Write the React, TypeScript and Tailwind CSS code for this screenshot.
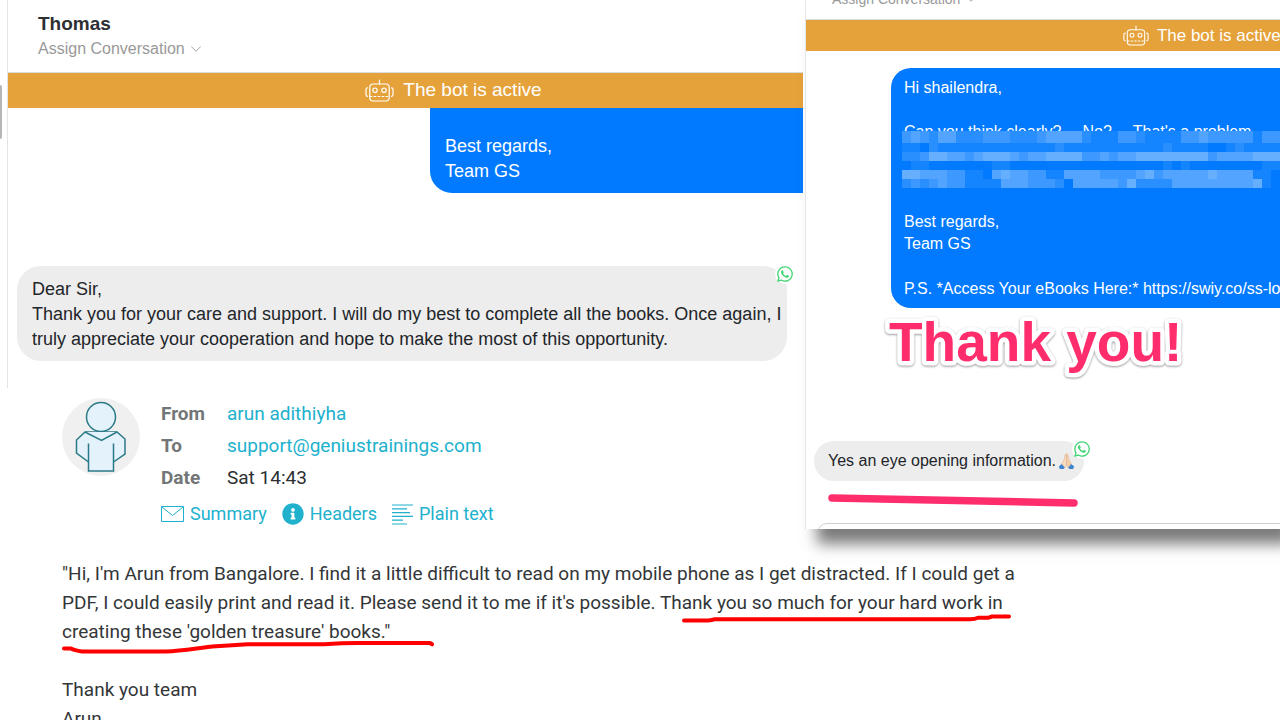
import { ChevronDown } from 'lucide-react'
import { FaInfoCircle, FaWhatsapp } from 'react-icons/fa'

// White strength (0-9) of each cell in the pixelated part of the message
const MOSAIC = [
  '343244222333222344442111332111133433333133',
  '110211111111111112111111111112111100121111',
  '223554434555434455553343445555555534444555',
  '011000000011000000000000000001010000000011',
  '554443311045443311444433334534444454444110',
  '232343311114443332044444352222444444444510',
]

function BotIcon({ className }: { className: string }) {
  return (
    <svg viewBox="0 0 29 24" className={className} fill="none" stroke="currentColor" strokeWidth="1.2" strokeLinecap="round">
      <path d="M14.5 1v4" />
      <path d="M4.8 17V8.500a3.500 3.500 0 0 1 3.500-3.500h12.400a3.500 3.500 0 0 1 3.500 3.500V19a3 3 0 0 1-3 3H7.800a3 3 0 0 1-3-3z" />
      <circle cx="10" cy="11.200" r="2.200" />
      <circle cx="19" cy="11.200" r="2.200" />
      <path d="M5 17.500h19" strokeDasharray="1.800 2.200" />
      <path d="M2.500 8.800c-1.200 0-1.500.6-1.500 1.600v5.200c0 1 .3 1.700 1.500 1.700M26.500 8.800c1.200 0 1.500.6 1.500 1.600v5.200c0 1-.3 1.700-1.500 1.700" />
    </svg>
  )
}

function PrayIcon() {
  return (
    <svg viewBox="0 0 18 18" className="w-[17px] h-[17px] shrink-0" role="img" aria-label="🙏🏻">
      <path d="M1 14l3.500-2.500 3 3.800L6 17H1.800z" fill="#3d84cf" />
      <path d="M17 14l-3.500-2.500-3 3.800L12 17h4.200z" fill="#3d84cf" />
      <path d="M8.900 1c-.8-.1-1.300.5-1.500 1.500L6.500 7 4 11.300l3.300 4.200 1.700-2.800z" fill="#f8dcc0" stroke="#d9a982" strokeWidth=".5" />
      <path d="M9.100 1c.8-.1 1.300.5 1.500 1.500l.9 4.500 2.500 4.300-3.300 4.200L9 12.700z" fill="#f5d0ad" stroke="#d9a982" strokeWidth=".5" />
    </svg>
  )
}

function Mosaic() {
  return (
    <svg viewBox="0 0 378 57" className="absolute -left-[2px] top-[10px] w-[378px] h-[57px]" shapeRendering="crispEdges" aria-hidden="true">
      <rect width="378" height="57" fill="#017aff" />
      {MOSAIC.map((row, r) =>
        row.split('').map((cell, c) => (
          <rect
            key={`${r}-${c}`}
            x={c * 9}
            y={r === 0 ? 0 : 3 + r * 9}
            width="9"
            height={r === 0 ? 12 : 9}
            fill="#ffffff"
            fillOpacity={Number(cell) * 0.08}
          />
        ))
      )}
    </svg>
  )
}

function WhatsAppBadge() {
  return (
    <span className="absolute -top-[2px] -right-[8px] p-[1px] rounded-full bg-white text-[#3fd573]">
      <FaWhatsapp className="w-[18px] h-[18px]" />
    </span>
  )
}

function LeftChat() {
  return (
    <section className="flex h-[388px] pr-[2px]">
      <div className="w-[7px] shrink-0 pt-[85px]">
        <div className="w-[2px] h-[54px] rounded-r bg-[#b5b5b5]" />
      </div>
      <div className="flex-1 min-w-0 border-l border-[#e4e4e6]">
        <header className="h-[73px] pt-3 pl-[30px] border-b border-[#d9dce0]">
          <h2 className="text-[19px] leading-6 font-bold text-[#2d2f33]">Thomas</h2>
          <button type="button" className="flex items-center gap-[2px] text-[16px] leading-[26px] text-[#999999]">
            Assign Conversation
            <ChevronDown className="w-[18px] h-[18px]" strokeWidth={1.2} />
          </button>
        </header>
        <div className="h-[35px] pl-24 flex items-center justify-center gap-[9px] bg-[#e5a23b] text-white text-[19px]">
          <BotIcon className="w-[29px] h-[24px]" />
          <span>The bot is active</span>
        </div>
        <div className="ml-[422px] h-[85px] pt-[26px] pl-[15px] rounded-bl-[22px] bg-[#017aff] text-white text-[18px] leading-[25px]">
          <p>Best regards,</p>
          <p>Team GS</p>
        </div>
        <div className="relative mt-[73px] ml-[9px] mr-4 pt-[11px] pb-[9px] pl-[15px] rounded-[24px] bg-[#ededed] text-[#222529] text-[18px] leading-[25px] whitespace-nowrap">
          <p>Dear Sir,</p>
          <p>
            Thank you for your care and support. I will do my best to complete all the books. Once again, I
            <br />
            truly appreciate your cooperation and hope to make the most of this opportunity.
          </p>
          <WhatsAppBadge />
        </div>
      </div>
    </section>
  )
}

function MailHeader() {
  return (
    <section className="flex pt-[10px] pl-[62px] font-[Roboto,sans-serif] text-[19px]">
      <svg viewBox="0 0 78 78" className="w-[78px] h-[78px] shrink-0" fill="#e3f2fb" stroke="#2b7a87" strokeWidth="1.500">
        <circle cx="39" cy="39" r="39" fill="#f0f0f0" stroke="none" />
        <circle cx="39" cy="19" r="14.500" />
        <path d="M23 34h32l8 7v15L52 64V73H26.500V64L14.500 55V42z" stroke="none" />
        <path d="M26.500 64L14.500 55V42L23 34h32l8 7v15L51.500 64" />
        <path d="M23 34l16.500 8.500L55 34M26.500 45.500V73h25V45.500" />
      </svg>
      <div className="pl-[21px]">
        <dl className="grid grid-cols-[66px_auto] leading-8">
          <dt className="font-bold text-[#737677]">From</dt>
          <dd><a href="#sender" className="text-[#20b1cd]">arun adithiyha</a></dd>
          <dt className="font-bold text-[#737677]">To</dt>
          <dd><a href="#recipient" className="text-[#20b1cd]">support@geniustrainings.com</a></dd>
          <dt className="font-bold text-[#737677]">Date</dt>
          <dd className="text-[#2c2f31]">Sat 14:43</dd>
        </dl>
        <nav className="flex items-center gap-[15px] pt-1 leading-8 text-[18px] text-[#20b1cd]">
          <a href="#summary" className="flex items-center gap-[6px]">
            <svg viewBox="0 0 23 16" className="w-[23px] h-[16px]" fill="none" stroke="currentColor">
              <path d="M.5.5h22v15H.5zM1 1l10.500 8.500L22 1" />
            </svg>
            Summary
          </a>
          <a href="#headers" className="flex items-center gap-[6px]">
            <FaInfoCircle className="w-[22px] h-[22px]" />
            Headers
          </a>
          <a href="#plain" className="flex items-center gap-[6px]">
            <svg viewBox="0 0 21 21" className="w-[21px] h-[21px]" fill="none" stroke="currentColor" strokeWidth="1.200">
              <path d="M0 1h21M0 4.800h15M0 8.600h18M0 12.400h21M0 16.200h11M0 20h15" />
            </svg>
            Plain text
          </a>
        </nav>
      </div>
    </section>
  )
}

function RightChat() {
  return (
    <section className="relative z-10 h-[529px] bg-white shadow-[12px_15px_14px_rgba(0,0,0,0.52)]">
      <div className="h-full overflow-hidden border-l border-[#e6e6e8]">
        <div className="w-[167%]">
          <header className="h-5 pl-[26px] overflow-hidden border-b border-[#d9dce0]">
            <button type="button" className="-mt-[11px] flex items-center gap-[2px] text-[14px] leading-5 text-[#999999]">
              Assign Conversation
              <ChevronDown className="w-[18px] h-[18px]" strokeWidth={1.2} />
            </button>
          </header>
          <div className="h-[31px] flex items-center justify-center gap-2 bg-[#e5a23b] text-white text-[17px]">
            <BotIcon className="w-[26px] h-[22px]" />
            <span>The bot is active</span>
          </div>
          <div className="mt-[17px] ml-[85px] pt-[9px] pb-2 pl-[13px] rounded-[20px] bg-[#017aff] text-white text-[16px] leading-[22px]">
            <p>Hi shailendra,</p>
            <div className="relative my-[22px] h-[68px]">
              <p className="flex gap-[21px]">
                <span>Can you think clearly?</span>
                <span>No?</span>
                <span>That's a problem</span>
              </p>
              <Mosaic />
            </div>
            <p>Best regards,</p>
            <p>Team GS</p>
            <p className="mt-[23px]">P.S. *Access Your eBooks Here:* https://swiy.co/ss-log</p>
          </div>
          <h1 className="relative mt-[6px] ml-[83px] h-14">
            <svg className="block w-[320px] h-14 overflow-visible drop-shadow-[0_1px_1px_rgba(0,0,0,0.4)]">
              <text
                x="0"
                y="47"
                className="text-[55px] font-bold [paint-order:stroke_fill]"
                fill="#ff2d6c"
                stroke="#ffffff"
                strokeWidth="9"
                strokeLinejoin="round"
              >
                Thank you!
              </text>
            </svg>
          </h1>
          <div className="relative mt-[71px] ml-2 w-[270px] h-10 pl-[14px] flex items-center gap-[2px] rounded-full bg-[#ededed] text-[#222529] text-[16px] whitespace-nowrap">
            Yes an eye opening information.
            <PrayIcon />
            <WhatsAppBadge />
          </div>
          <svg viewBox="0 0 252 18" className="mt-[11px] ml-[22px] w-[252px] h-[18px]" fill="none" stroke="#ff2d6c" strokeWidth="7.500" strokeLinecap="round">
            <path d="M4 6L246 11" />
          </svg>
          <div className="mt-[13px] ml-[11px] h-10 rounded-[10px] border border-[#cfd1d4]" />
        </div>
      </div>
    </section>
  )
}

function MailBody() {
  return (
    <article className="pt-[29px] pl-[62px] font-[Roboto,sans-serif] text-[19px] leading-[29px] text-[#333638]">
      <div className="relative">
        <p>
          "Hi, I'm Arun from Bangalore. I find it a little difficult to read on my mobile phone as I get distracted. If I could get a
          <br />
          PDF, I could easily print and read it. Please send it to me if it's possible. Thank you so much for your hard work in
          <br />
          creating these 'golden treasure' books."
        </p>
        {/* hand drawn underlines */}
        <svg viewBox="0 0 960 100" className="absolute left-0 top-0 w-[960px] h-[100px]" fill="none" stroke="#ff0000" strokeWidth="4" strokeLinecap="round" strokeLinejoin="round" aria-hidden="true">
          <path d="M622 61.500h24q4 0 7-1.300h255q5 0 8-1.400h10l4-1.300h17" />
          <path d="M2 89.500h7q3 1.800 11 3h84c18-.3 34-4 50-5.200l32-2h76q18-1.300 34-1.300h72l2 1.300" />
        </svg>
      </div>
      <p className="mt-[29px]">Thank you team</p>
      <p>Arun</p>
    </article>
  )
}

export default function App() {
  return (
    <main className="h-screen overflow-hidden bg-white font-['Liberation_Sans',Arial,sans-serif]">
      <div className="grid grid-cols-[805fr_475fr]">
        <div className="min-w-0">
          <LeftChat />
          <MailHeader />
        </div>
        <div className="min-w-0">
          <RightChat />
        </div>
      </div>
      <MailBody />
    </main>
  )
}
